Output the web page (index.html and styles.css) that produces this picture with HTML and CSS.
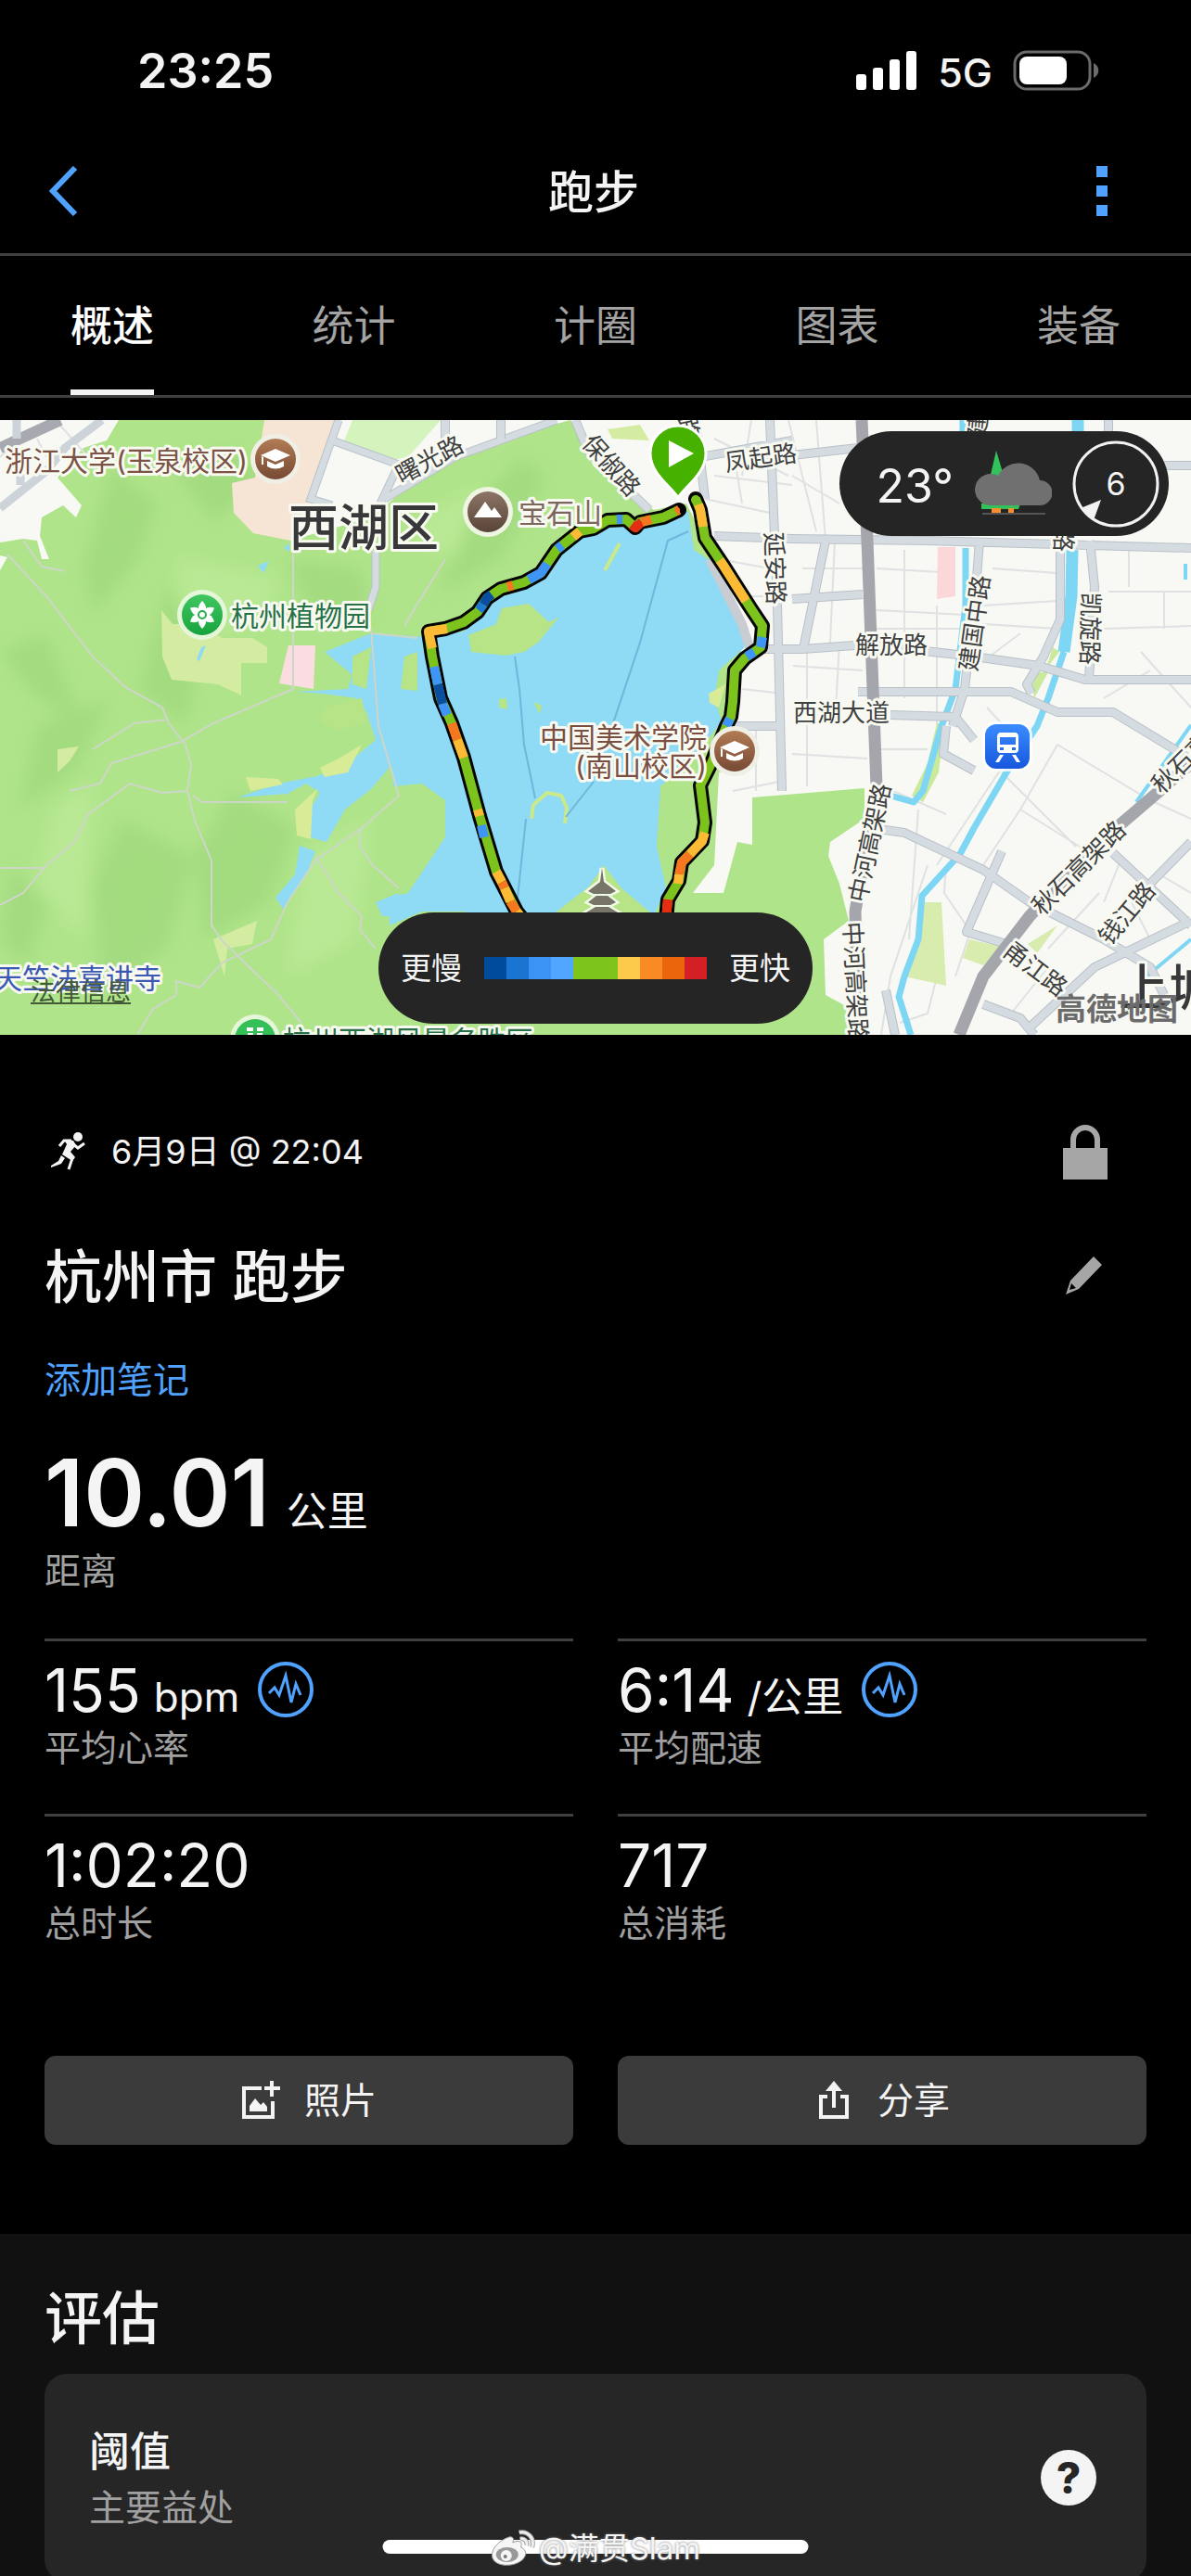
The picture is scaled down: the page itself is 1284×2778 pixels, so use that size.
FILE: index.html
```html
<!DOCTYPE html>
<html lang="zh-CN">
<head>
<meta charset="utf-8">
<meta name="viewport" content="width=device-width, initial-scale=1">
<title>跑步</title>
<link rel="stylesheet" href="styles.css">
</head>
<body>
<div class="app">
  <div class="status">
    <span class="clock">23:25</span>
    <div class="status-right">
      <svg class="signal" viewBox="0 0 66 42" aria-hidden="true"><rect x="0" y="25" width="11" height="17" rx="3"/><rect x="18" y="18" width="11" height="24" rx="3"/><rect x="36" y="9" width="11" height="33" rx="3"/><rect x="54" y="0" width="11" height="42" rx="3"/></svg>
      <span class="network">5G</span>
      <svg class="battery" viewBox="0 0 94 44" aria-hidden="true"><rect x="2" y="2" width="81" height="40" rx="13" fill="none" stroke="#6b6b6b" stroke-width="3"/><rect x="7" y="7" width="51" height="30" rx="8" fill="#fff"/><path d="M87 14c7 3 7 13 0 16z" fill="#6b6b6b"/></svg>
    </div>
  </div>

  <header class="header">
    <button class="icon-button" aria-label="返回"><svg class="back" viewBox="0 0 32 54"><path d="M28 2 4 27l24 25" fill="none" stroke="#4fa3ff" stroke-width="6"/></svg></button>
    <h1 class="header-title">跑步</h1>
    <button class="icon-button" aria-label="更多"><svg class="more" viewBox="0 0 14 56"><path d="M1 1h12v12H1zM1 22h12v12H1zM1 43h12v12H1z" fill="#4fa3ff"/></svg></button>
  </header>

  <nav class="tabs">
    <a class="tab active" href="#overview" aria-current="page">概述</a>
    <a class="tab" href="#stats">统计</a>
    <a class="tab" href="#laps">计圈</a>
    <a class="tab" href="#charts">图表</a>
    <a class="tab" href="#gear">装备</a>
  </nav>

  <main class="content" id="overview">
    <section class="map">
      <svg class="map-canvas" viewBox="0 0 1284 663" preserveAspectRatio="xMidYMid slice">
        <defs>
          <linearGradient id="brown" x2="0" y2="1"><stop stop-color="#b17b55"/><stop offset="1" stop-color="#774a34"/></linearGradient>
          <linearGradient id="stone" x2="0" y2="1"><stop stop-color="#8c7566"/><stop offset="1" stop-color="#594438"/></linearGradient>
          <linearGradient id="leaf" x2="0" y2="1"><stop stop-color="#41c761"/><stop offset="1" stop-color="#16a33d"/></linearGradient>
          <linearGradient id="transit" x2="0" y2="1"><stop stop-color="#3b8cff"/><stop offset="1" stop-color="#1757dc"/></linearGradient>
          <filter id="soft" x="-20%" y="-20%" width="140%" height="140%"><feGaussianBlur stdDeviation="9"/></filter>
          <g id="cap" fill="#fff"><path d="M-16-4 0-11l16 7L0 3z"/><path d="M-9 2 0 6l9-4v6Q0 13-9 8z"/><path d="M-15-3v9h2v-8z"/></g>
          <path id="roads" d="M830 0 838 200 843 400M755 40 854 22M770 125 854 128 1000 130 1284 138M854 38 925 30M1255 49H1284M854 193 930 188M820 247H865L935 242 1050 255 1120 265 1170 280 1284 280M925 293H1090L1140 315H1200L1284 366M960 318 1030 320 1050 345M1056 130 1053 170 1040 290 1027 330M1143 140V215L1125 255 1107 285 1112 295M1175 130 1180 180 1174 280M890 130 866 247M1195 0V20M940 440 975 445 1060 485 1110 520 1190 560 1240 590 1255 620M1080 465 1042 552 1085 565M1200 467 1284 545M1284 455 1240 500M1284 540 1180 590 1110 655M955 615 965 663M1060 630 1100 645 1115 663M1020 330 1017 360 1050 378M790 330H845M750 0 760 85M620 0 635 35 700 97M480 0V30M540 0V20"/>
          <path id="track" d="M732 97 715 105 690 110 685 116 675 107 655 108 640 117 625 120 600 140 583 165 565 175 540 182 525 192 515 207 500 218 480 225 462 228 466 255 475 300 487 327 500 364 517 427 535 487 557 530 575 552M750 85 755 97 760 127 780 157 810 204 822 222 820 245 803 257 792 270 790 304 788 320 783 330 767 370 755 394 760 434 757 454 735 477 732 497 720 517 717 550"/>
        </defs>
        <rect width="1284" height="663" fill="#f8f8f4"/>

        <path fill="#b0e48a" d="M0 0H615L640 50 705 97 740 90 765 140 800 230 790 400 811 407 932 397 932 430 895 455 893 470 905 500 915 540 888 560 890 620 912 632 915 663H0z"/>
        <g filter="url(#soft)" fill="#93cf72" opacity=".42">
          <path d="M120 50 170 90 150 150 100 210 90 160zM240 30 290 60 230 110 190 60zM130 430 210 470 180 570 110 620 100 500zM0 250 50 230 90 330 40 300zM250 400 320 440 290 520 220 560 210 470zM560 40 590 60 540 150 470 190 510 100zM40 330 120 300 80 380 20 420zM310 150 390 160 400 220 330 200zM180 180 220 240 200 330 150 290zM10 480 50 520 30 590 0 560z"/>
        </g>
        <g filter="url(#soft)" fill="#c3eea0" opacity=".5"><path d="M190 150 300 170 280 220 200 230zM60 420 100 390 90 560 40 500zM330 470 400 430 380 560 310 600zM430 120 520 70 490 150z"/></g>
        <path fill="#f8f8f4" d="M0 0H128L115 22 90 30 62 62 88 92 82 105 68 92 45 105 43 125 53 150 45 150 40 130 25 128 0 132zM0 146 8 148 0 162zM365 0H615L560 15 500 32 440 72 400 105 330 125 313 130 340 60 365 0z"/>
        <path fill="#f6e4d4" d="M285 0H363L335 85 313 130 273 122 252 100 250 68 275 62z"/>
        <path fill="#d4f3bd" d="M380 0H475L440 40 412 45 370 25z"/>
        <path fill="#d4eca2" d="M174 205 186 220H210L240 235H272L288 245V262L260 262V297L235 285 185 280 175 255zM62 355 85 352 75 368 62 380zM230 560 277 540 272 565 245 570 242 600zM655 10 690 5 700 22 660 20z"/>
        <path fill="#fbdde1" d="M311 243H340L338 290 301 284z"/>

        <path fill="#8fdaf5" d="M460 234 500 228 520 195 555 180 583 165 605 138 640 118 670 108 690 118 742 98 748 140 763 150 800 225 803 245 775 270 770 300 778 325 755 355 712 395 708 460 718 505 700 545 560 545 500 530 455 530 420 545 418 515 440 510 480 450 480 410 455 392 424 395 422 372 400 398 372 420 352 455 335 450 334 420 345 402 330 392 310 403 256 407 300 392 342 384 375 370 405 345 395 315 385 300 348 295 318 293 375 290 380 275 350 250 400 230z"/>
        <path fill="#8fdaf5" d="M323 459 340 465 330 490 305 527 297 515 318 490zM405 520 430 510V535L412 535zM278 157 290 152 284 165zM306 138 312 133V142zM217 245 222 243 215 260 212 258z"/>
        <g fill="#b7e486"><path d="M505 232 535 220 541 203 570 198 592 218 603 212 580 240 565 250 545 254 508 250z"/><path d="M600 530 635 503 651 480 670 505 700 530V545H600zM538 301 546 300 547 312 538 310zM575 304 584 308 582 317zM380 255 400 245 395 290 380 285zM350 310 390 300 395 325 365 335 345 325zM436 255 450 250 450 292 432 290zM745 120 760 145 752 140zM785 262 795 260 778 300z"/></g>
        <path fill="#d8ec98" d="M764 295 782 285 775 310 765 305zM318 420 343 397 337 410 335 452 320 448zM265 385 300 387 305 393 270 400zM345 375 365 365 390 350 375 380 350 385z"/>
        <path fill="none" stroke="#c9e98a" stroke-width="4" d="M573 430 575 415 590 402 605 405 611 418 609 435M652 162 668 133"/>
        <path fill="#f8f8f4" d="M775 380 811 375V458L795 455 780 510H747L770 480z"/>
        <g fill="none" stroke="#6fb6da" stroke-width="2"><path d="M742 120 720 130 690 240 660 330M555 255 560 290 565 350 577 408M567 430 558 515M640 390 610 428"/></g>

        <g fill="none" stroke="#cdd6c8" stroke-width="2"><path d="M8 145 50 190 100 255 135 288 175 310 182 327 200 350 206 372 202 400 210 432 228 475 228 545 240 562 300 620 325 650M25 130 45 158 70 163M180 323 145 327 100 355M148 663 165 635 190 620 190 605 215 612 240 585 292 560 310 520 340 475 390 440 430 405 408 330 400 225M316 130V290L230 327 195 347 120 370 108 392 75 400M202 400 175 402 140 392 95 425 80 455 50 480 25 510 0 523M0 483H47M208 405 218 412H310M340 470 365 510 390 535 388 550 405 570M388 440V460L402 480 430 505M450 235 400 230M436 222 455 190 480 150"/></g>
        <path fill="none" stroke="#b9c1c9" stroke-width="9" d="M365 0 335 85 358 92M358 22 430 48 410 90M405 140V180L397 205M415 85 490 40 600 0"/>
        <path fill="none" stroke="#d5dce1" stroke-width="7" d="M365 0 335 85 358 92M358 22 430 48 410 90M405 140V180L397 205M415 85 490 40 600 0"/>

        <g fill="none" stroke="#dfe1e2" stroke-width="2">
          <path d="M854 60 905 90M880 0 890 130M900 130 895 240M865 160H930M945 160 1030 165M945 205 1040 210M945 225H1040M975 140V300M1010 200V330M855 265 930 270M870 250V330M905 240 900 330M1070 160 1140 165M1060 200 1140 195M1217 140V180M1195 185H1284M1255 185V225M1190 225 1284 222M1060 220 1140 225M1064 310 1110 360M854 360 935 365M870 330V395M950 355H1000M963 400 1020 425M1140 350 1100 420 1060 480M1080 330 1100 345 1010 480M1140 350 1240 410 1284 430M1100 420 1180 470 1190 440M1000 480 960 600M960 600 950 663M1020 480 1018 510 1045 550M1080 380 1160 460M1185 510 1130 570M1210 470 1190 520M1030 600 1050 540M1130 590 1090 640M1010 545V600L1000 640 970 650M1220 520 1240 560M1250 490 1284 510M770 20 850 60M770 60 854 70M760 85 830 100M775 150 830 160M800 190 835 190M790 30 800 90M810 0 800 60M800 290 845 295M790 400 840 390M815 330V400M850 0 880 120M1230 250 1284 310M1190 300 1240 270M1100 230 1060 260M990 420 980 560"/>
          <path d="M10 30 0 40M40 20 60 60M60 0 95 40"/>
        </g>
        <g fill="none" stroke-linejoin="round">
          <path fill="#fbd7da" d="M1011 137H1030V190L1010 193z"/>
          <path fill="#cbe99b" d="M1135 245 1142 250 1128 268zM1120 272 1130 272 1115 300 1113 285zM1010 327H1018L1012 380 995 412 983 405 1000 370z"/>
          <path fill="#d8ecae" d="M991 520 1015 520 1020 610 975 600 990 570zM1045 560 1080 568 1060 588 1038 580zM1140 545 1118 575 1108 565z"/>
          <path stroke="#7dd6f4" stroke-width="13" d="M1162 0V25M1156 140 1155 190 1147 250"/>
          <path stroke="#7dd6f4" stroke-width="7" d="M1147 250 1130 300 1118 330 1085 380 1050 440 1035 468 994 513 990 560 975 600 969 622 982 663M1038 0V20M1041 138V200L1030 290 1015 330 995 400 985 412 960 405"/>
          <path stroke="#7dd6f4" stroke-width="4" d="M1284 329 1225 412M1284 560 1230 605M1278 155V172"/>
        </g>
        <g fill="none" stroke-linejoin="round">
          <use href="#roads" stroke="#b9c0c7" stroke-width="10"/>
          <use href="#roads" stroke="#d5dce1" stroke-width="8"/>
          <path stroke="#a5a6ac" stroke-width="13" d="M929 0 935 130 945 395 922 530 925 663M1034 663 1060 600 1110 535 1180 460 1250 400 1284 370"/>
          <path stroke="#a6aab0" stroke-width="12" d="M0 30 65 0"/><path stroke="#ccd4da" stroke-width="9" d="M0 95 50 55 70 30 110 0M18 0V20M22 50V70"/>
          <path stroke="#c9ccd3" stroke-width="10" d="M765 150 800 220 808 245"/>
        </g>

        <g fill="none" stroke-linecap="round" stroke-linejoin="round">
          <use href="#track" stroke="#050505" stroke-width="16"/>
          <g stroke-width="10" stroke-linecap="butt">
            <use href="#track" stroke="#7cc41d"/>
            <path stroke="#e52d12" d="M692 110 685 116 681 113M720 517 717 550"/>
            <path stroke="#f77720" d="M732 97 729 98M702 107 692 110M553 178 547 180M487 327 493 345M744 468 735 477 732 490M550 519 557 530M541 498 544 505"/>
            <path stroke="#fdbb35" d="M482 225 462 228 466 246M753 91 755 97 758 115M776 151 780 157 804 195M493 345 500 364M515 420 517 427M535 487 541 498M544 505 550 519M557 530 570 546M760 445 757 454 744 468M732 490 731 500M625 120 618 126"/>
            <path stroke="#3e95f6" d="M468 266 472 285M477 306 482 318M590 155 583 165 570 172M606 135 601 139M665 107 671 107M519 437 522 450M822 234 820 245M813 250 805 255M787 322 783 330"/>
            <path stroke="#0a4f9f" d="M530 188 525 192 521 199M472 285 477 306"/>
            <path stroke="#1e79d4" d="M521 199 516 205"/>
          </g>
          <circle cx="750" cy="86" r="5" fill="#7cc41d"/><circle cx="730" cy="97" r="3" fill="#f77720"/>
        </g>

        <g fill="#777468" stroke="#f1fae6" stroke-width="5" paint-order="stroke"><path d="M649 483 651 498 664 508 658 511H640L634 508 647 498zM643 513H655L664 520 658 523H640L634 520zM642 525H656L666 531H632z"/></g>

        <g class="poi">
          <text x="5" y="55" fill="#7b5245">浙江大学(玉泉校区)</text>
          <text x="249" y="222" fill="#267246">杭州植物园</text>
          <text x="559" y="111" fill="#7c655b">宝石山</text>
          <text x="762" y="353" text-anchor="end" fill="#7b4e42">中国美术学院</text>
          <text x="762" y="384" text-anchor="end" fill="#7b4e42">(南山校区)</text>
          <text x="-6" y="613" fill="#3c58b2">天竺法喜讲寺</text>
          <text x="305" y="680" fill="#267246">杭州西湖风景名胜区</text>
        </g>
        <g class="district"><text x="311" y="136">西湖区</text><text x="1206" y="632">上城区</text></g>
        <g class="road">
          <text transform="translate(463 43) rotate(-28)" y="9">曙光路</text>
          <text transform="translate(659 49) rotate(48)" y="9">保俶路</text>
          <text transform="translate(820 41) rotate(-8)" y="9">凤起路</text>
          <text transform="translate(835 160) rotate(88)" y="9">延安路</text>
          <text transform="translate(1051 219) rotate(-82)" y="9">建国中路</text>
          <text transform="translate(1175 225) rotate(91)" y="9">凯旋路</text>
          <text transform="translate(961 243)" y="9">解放路</text>
          <text transform="translate(907 316)" y="9">西湖大道</text>
          <text transform="translate(938 456) rotate(-78)" y="9">中河高架路</text>
          <text transform="translate(922 606) rotate(87)" y="9">中河高架路</text>
          <text transform="translate(1163 483) rotate(-45)" y="9">秋石高架路</text>
          <text transform="translate(1292 352) rotate(-45)" y="9">秋石高架路</text>
          <text transform="translate(1215 532) rotate(-50)" y="9">钱江路</text>
          <text transform="translate(1116 592) rotate(37)" y="9">甬江路</text>
          <text transform="translate(1147 90) rotate(91)" y="9">环城东路</text>
          <text transform="translate(1058 -34) rotate(-85)" y="9">建国北路</text>
          <text transform="translate(734 -30) rotate(78)" y="9">环城西路</text>
        </g>

        <circle cx="297" cy="42" r="27" fill="#f0efe5"/><circle cx="297" cy="42" r="22" fill="url(#brown)"/><use href="#cap" x="297" y="42"/>
        <circle cx="792" cy="357" r="27" fill="#f0efe5"/><circle cx="792" cy="357" r="22" fill="url(#brown)"/><use href="#cap" x="792" y="357"/>
        <circle cx="526" cy="99" r="27" fill="#eef5e2"/><circle cx="526" cy="99" r="22" fill="url(#stone)"/><path d="M511 105 523 88 530 98 533 94 541 105z" fill="#fff"/>
        <circle cx="218" cy="210" r="27" fill="#e6f6d9"/><circle cx="218" cy="210" r="22" fill="url(#leaf)"/>
        <g transform="translate(218 210)" fill="#fff"><path id="petal" d="M0-15Q8-7 0 0Q-8-7 0-15z"/><use href="#petal" transform="rotate(60)"/><use href="#petal" transform="rotate(120)"/><use href="#petal" transform="rotate(180)"/><use href="#petal" transform="rotate(240)"/><use href="#petal" transform="rotate(300)"/><circle r="4" stroke="#25ae4b" stroke-width="2"/></g>
        <circle cx="275" cy="668" r="27" fill="#e6f6d9"/><circle cx="275" cy="668" r="22" fill="#35bf57"/><path d="M266 655h7v4h-7zM277 655h7v4h-7zM267 661h6v4h-6zM277 661h6v4h-6z" fill="#fff"/>
        <rect x="1059" y="325" width="54" height="54" rx="15" fill="#fff" opacity=".8"/><rect x="1062" y="328" width="48" height="48" rx="12" fill="url(#transit)"/>
        <path fill="#fff" fill-rule="evenodd" d="M1079 337h15q4 0 4 5v13q0 4-4 4h-15q-4 0-4-4v-13q0-5 4-5zM1078 342v8h17v-8zM1078 353v3h4v-3zM1091 353v3h4v-3zM1078 361h4l-5 8h-4zM1091 361h4l5 8h-4z"/>
        <path d="M731 84C724 72 701 58 701 36a30 30 0 0 1 60 0C761 58 738 72 731 84z" fill="#47b100" stroke="#fff" stroke-width="3"/><path d="M721 22 748 36 721 51z" fill="#fff"/>
      </svg>
      <a class="legal" href="#legal">法律信息</a>
      <span class="provider">高德地图</span>
      <div class="weather">
        <span class="temp">23°</span>
        <svg class="cloud" viewBox="0 0 84 72" aria-hidden="true"><path d="M24 0 33 30H17z" fill="#32c15a"/><path d="M8 57h42l-2 6H8z" fill="#32c15a"/><path d="M19 62h10v5H19zM37 62h6v5h-6z" fill="#f98d2b"/><path d="M9 67h68v2H9z" fill="#555"/><path d="M17 59a17 17 0 1 1 9-32A24 24 0 0 1 71 32a13 13 0 0 1 0 27z" fill="#707070"/></svg>
        <div class="wind"><svg class="wind-ring" viewBox="0 0 94 94" aria-hidden="true"><circle cx="47" cy="47" r="45" fill="none" stroke="#f2f2f2" stroke-width="3"/><path d="M31 64 9 73 23 86z" fill="#f2f2f2"/></svg><span>6</span></div>
      </div>
      <div class="legend">
        <span>更慢</span>
        <div class="scale"><i class="s1"></i><i class="s2"></i><i class="s3"></i><i class="s4"></i><i class="s5"></i><i class="s5"></i><i class="s6"></i><i class="s7"></i><i class="s8"></i><i class="s9"></i></div>
        <span>更快</span>
      </div>
    </section>

    <section class="summary">
      <div class="row meta">
        <svg class="runner" viewBox="0 0 40 42" aria-hidden="true"><circle cx="30" cy="5" r="5" fill="#f4f4f4"/><path d="M10 15 15 9 23 9M25 13 30 17 37 12M16 23 24 28 20 40" fill="none" stroke="#f4f4f4" stroke-width="3"/><path d="M15 8 25 9 28 14 22 21 27 27 24 31 13 24 18 13z" fill="#f4f4f4"/><path d="M12 25 16 28 12 34 1 38V36L9 31z" fill="#f4f4f4"/></svg>
        <span class="date">6月9日 @ 22:04</span>
        <button class="icon-button end" aria-label="隐私"><svg class="lock" viewBox="0 0 48 62"><path d="M11 30V18a13 13 0 0 1 26 0v12" fill="none" stroke="#a6a6a6" stroke-width="6"/><path d="M0 27h48v34H0z" fill="#a6a6a6"/></svg></button>
      </div>
      <div class="row name">
        <h2 class="title">杭州市 跑步</h2>
        <button class="icon-button end" aria-label="编辑"><svg class="pencil" viewBox="0 0 48 42"><path fill-rule="evenodd" d="M33 0 42 9 17 35 3 41 8 26zM9 29 7 36 14 34z" fill="#a6a6a6"/></svg></button>
      </div>
      <a class="note" href="#note">添加笔记</a>
      <p class="distance"><strong>10.01</strong><span class="unit">公里</span></p>
      <p class="label">距离</p>
      <div class="stats">
        <div class="stat"><p class="value"><span>155</span><span class="unit">bpm</span><svg class="pulse" viewBox="0 0 60 60" aria-hidden="true"><circle cx="30" cy="30" r="28" fill="none" stroke="#4fa3ff" stroke-width="4"/><path d="M12 34 18 28 23 36 30 15 36 44 41 24 46 36" fill="none" stroke="#4fa3ff" stroke-width="3"/></svg></p><p class="label">平均心率</p></div>
        <div class="stat"><p class="value"><span>6:14</span><span class="unit">/公里</span><svg class="pulse" viewBox="0 0 60 60" aria-hidden="true"><circle cx="30" cy="30" r="28" fill="none" stroke="#4fa3ff" stroke-width="4"/><path d="M12 34 18 28 23 36 30 15 36 44 41 24 46 36" fill="none" stroke="#4fa3ff" stroke-width="3"/></svg></p><p class="label">平均配速</p></div>
        <div class="stat"><p class="value"><span>1:02:20</span></p><p class="label">总时长</p></div>
        <div class="stat"><p class="value"><span>717</span></p><p class="label">总消耗</p></div>
      </div>
      <div class="actions">
        <button class="action"><svg viewBox="0 0 42 42" aria-hidden="true"><path d="M22 8H3v31h31V22M33 0v17M25 8h17" fill="none" stroke="#f4f4f4" stroke-width="4"/><path d="M9 33v-6l6-8 6 7 3-3 4 5v5z" fill="#f4f4f4"/></svg>照片</button>
        <button class="action"><svg viewBox="0 0 42 42" aria-hidden="true"><path d="M14 17H7v22h28V17h-7M21 29V4" fill="none" stroke="#f4f4f4" stroke-width="4"/><path d="M21 0 30 11H12z" fill="#f4f4f4"/></svg>分享</button>
      </div>
    </section>

    <section class="assess">
      <h2 class="title">评估</h2>
      <div class="card">
        <div><h3 class="card-title">阈值</h3><p class="label">主要益处</p></div>
        <button class="help" aria-label="帮助">?</button>
      </div>
    </section>
  </main>
  <div class="home-bar"></div>
  <div class="watermark">
    <svg viewBox="0 0 48 40" aria-hidden="true"><path d="M20 8C8 12 0 22 2 30c3 10 22 11 32 3 6-6 5-11-1-14 2-7-3-8-9-5 2-4 0-7-4-6z" fill="#f5f5f5" stroke="#999" stroke-width="1"/><ellipse cx="18" cy="27" rx="12" ry="8" fill="#999"/><circle cx="17" cy="28" r="6" fill="#f5f5f5"/><circle cx="16" cy="29" r="2" fill="#777"/><path d="M32 10c5-1 8 3 7 7M31 3c9-2 17 6 14 16" fill="none" stroke="#999" stroke-width="5"/><path d="M32 10c5-1 8 3 7 7M31 3c9-2 17 6 14 16" fill="none" stroke="#eee" stroke-width="3"/></svg>
    <span>@满贯Slam</span>
  </div>
</div>
</body>
</html>
```
FILE: styles.css
```css
* { box-sizing: border-box; margin: 0; padding: 0; }
body { background: #000; color: #f4f4f4; font-family: Inter, "Noto Sans CJK SC", sans-serif; font-size: 39px; line-height: 48px; }
button { background: none; border: 0; color: inherit; font: inherit; }
a { color: inherit; text-decoration: none; }
svg { display: block; }
.app { position: relative; display: flex; flex-direction: column; height: 100vh; overflow: hidden; }

.status { flex: none; display: flex; align-items: center; justify-content: space-between; height: 152px; padding: 0 98px 0 148px; }
.clock { padding-top: 2px; font-size: 52px; font-weight: 600; }
.status-right { display: flex; align-items: center; gap: 22px; }
.signal { width: 66px; height: 42px; fill: #fff; }
.network { padding-top: 4px; font-size: 43px; font-weight: 500; }
.battery { width: 94px; height: 44px; }

.header { flex: none; display: flex; align-items: center; justify-content: space-between; height: 124px; padding: 0 89px 14px 53px; border-bottom: 3px solid #404040; }
.header-title { padding: 4px 0 0 14px; font-size: 49px; font-weight: 500; line-height: 60px; }
.back { width: 32px; height: 54px; }
.more { width: 14px; height: 56px; }

.tabs { flex: none; display: flex; justify-content: space-between; height: 153px; padding: 0 76px; border-bottom: 3px solid #404040; }
.tab { display: flex; align-items: center; padding-top: 8px; border-bottom: 6px solid transparent; color: #a3a3a3; font-size: 45px; }
.tab.active { border-color: #f4f4f4; color: #fff; font-weight: 500; }

.content { flex: 1; min-height: 0; padding-top: 24px; overflow: hidden; }
.map { position: relative; }
.map-canvas { width: 100%; height: auto; }
.map-canvas text { stroke: #f8faf2; stroke-width: 6px; stroke-linejoin: round; paint-order: stroke; }
.poi { font-size: 30px; }
.district { fill: #38383a; font-size: 54px; font-weight: 500; }
.road { fill: #3f4042; font-size: 26px; text-anchor: middle; }
.legal { position: absolute; left: 33px; bottom: 30px; color: #435a39; font-size: 27px; line-height: 32px; text-decoration: underline; }
.provider { position: absolute; right: 14px; bottom: 10px; color: #6b6b6b; font-size: 33px; font-weight: 700; line-height: 36px; }
.weather { position: absolute; top: 12px; right: 24px; display: flex; align-items: center; gap: 22px; height: 113px; padding: 0 10px 0 40px; border-radius: 57px; background: #252525; }
.temp { padding-top: 4px; font-size: 50px; }
.cloud { width: 84px; height: 72px; }
.wind { position: relative; display: grid; place-items: center; width: 94px; height: 94px; font-size: 34px; }
.wind-ring { position: absolute; inset: 0; }
.legend { position: absolute; bottom: 12px; left: 50%; display: flex; align-items: center; justify-content: space-between; width: 468px; height: 120px; padding: 0 24px; border-radius: 60px; background: #252525; font-size: 33px; transform: translateX(-50%); }
.scale { display: flex; }
.scale i { width: 24px; height: 24px; }
.s1 { background: #014b9b; }
.s2 { background: #1975d1; }
.s3 { background: #3994f5; }
.s4 { background: #4fa5ff; }
.s5 { background: #7dc41b; }
.s6 { background: #fdca4a; }
.s7 { background: #fa8a24; }
.s8 { background: #ea650c; }
.s9 { background: #d41f24; }

.summary { padding: 92px 48px 96px; }
.row { display: flex; align-items: center; }
.end { margin-left: auto; }
.meta { height: 68px; padding-right: 42px; }
.runner { width: 40px; height: 42px; margin: 0 26px 0 6px; }
.date { font-size: 36px; }
.lock { width: 48px; height: 62px; }
.name { height: 132px; margin-top: 34px; padding-right: 42px; }
.title { padding-top: 4px; font-size: 62px; font-weight: 500; line-height: 72px; }
.pencil { width: 48px; height: 42px; }
.note { display: block; margin-top: 22px; color: #4fa3ff; }
.distance { display: flex; align-items: baseline; gap: 18px; height: 120px; margin-top: 38px; line-height: 120px; }
.distance strong { font-size: 100px; font-weight: 600; }
.unit { font-size: 44px; }
.label { color: #a0a0a0; line-height: 48px; }
.stats { display: grid; grid-template-columns: 1fr 1fr; gap: 48px; margin-top: 49px; }
.stat { height: 141px; border-top: 3px solid #404040; }
.value { display: flex; align-items: baseline; gap: 14px; height: 91px; font-size: 64px; line-height: 106px; }
.pulse { align-self: center; width: 60px; height: 60px; margin: 12px 0 0 6px; }
.actions { display: grid; grid-template-columns: 1fr 1fr; gap: 48px; margin-top: 120px; }
.action { display: flex; align-items: center; justify-content: center; gap: 26px; height: 96px; border-radius: 12px; background: #3b3b3b; }
.action svg { width: 42px; height: 42px; }

.assess { padding: 52px 48px 0; background: #111; }
.card { display: flex; align-items: center; justify-content: space-between; height: 224px; margin-top: 23px; padding: 0 54px 0 48px; border-radius: 24px; background: #262626; }
.card-title { margin-bottom: 8px; font-size: 44px; font-weight: 500; line-height: 56px; }
.help { width: 60px; height: 60px; border-radius: 50%; background: #f4f4f4; color: #262626; font-size: 46px; font-weight: 800; line-height: 60px; }

.home-bar { position: absolute; bottom: 24px; left: 50%; width: 459px; height: 15px; border-radius: 8px; background: #fff; transform: translateX(-50%); }
.watermark { position: absolute; bottom: 6px; left: 50%; display: flex; align-items: center; gap: 4px; color: #f4f4f4; font-size: 33px; text-shadow: 0 0 3px #777; transform: translateX(-50%); }
.watermark svg { width: 48px; height: 40px; }
```
